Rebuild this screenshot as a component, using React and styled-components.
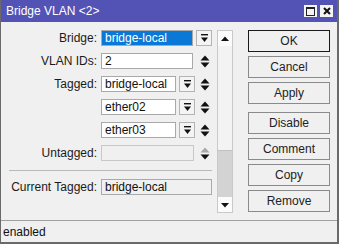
import React from "react";
import styled, { createGlobalStyle } from "styled-components";

// Bridge VLAN dialog (WinBox style)

const GlobalStyle = createGlobalStyle`
  html, body {
    margin: 0;
    padding: 0;
    background: #f0f0f0;
  }
  body {
    font-family: "Liberation Sans", Arial, sans-serif;
    font-size: 12px;
    color: #000;
  }
`;

const Window = styled.div`
  width: 339px;
  height: 244px;
  box-sizing: border-box;
  display: flex;
  flex-direction: column;
  background: #f0f0f0;
  border-left: 1px solid #6a6a6a;
  border-right: 2px solid #6a6a6a;
  border-bottom: 2px solid #6a6a6a;
  overflow: hidden;
`;

const TitleBar = styled.div`
  height: 22px;
  flex: none;
  display: flex;
  align-items: center;
  justify-content: space-between;
  background: #5353b6;
  color: #fff;
  padding: 0 4px 0 5px;
  font-size: 12px;
`;

const TitleButtons = styled.div`
  display: flex;
  gap: 3px;
`;

const TitleButton = styled.div`
  width: 13px;
  height: 12px;
  background: #f4f4f4;
  display: flex;
  align-items: center;
  justify-content: center;
`;

const Body = styled.div`
  flex: 1;
  display: flex;
  padding-top: 8px;
`;

const Form = styled.div`
  width: 211px;
  display: flex;
  flex-direction: column;
`;

const Row = styled.div`
  display: flex;
  align-items: center;
  height: 16px;
  margin-bottom: ${(p) => p.gap ?? 7}px;
`;

const Label = styled.div`
  width: 96px;
  margin-right: 4px;
  text-align: right;
  white-space: nowrap;
  color: #1a1a1a;
`;

const Field = styled.div`
  box-sizing: border-box;
  width: ${(p) => p.w}px;
  height: 16px;
  border: 1px solid ${(p) => (p.disabled ? "#c8c8c8" : "#a9a9a9")};
  background: ${(p) =>
    p.selected ? "#0a78d6" : p.readonly || p.disabled ? "#f0f0f0" : "#fff"};
  color: ${(p) => (p.selected ? "#fff" : "#111")};
  padding: 0 3px;
  line-height: 14px;
  white-space: nowrap;
  overflow: hidden;
`;

const DropButton = styled.div`
  box-sizing: border-box;
  width: 16px;
  height: 16px;
  margin-left: 3px;
  border: 1px solid #b4b4b4;
  background: #f4f4f4;
  display: flex;
  align-items: center;
  justify-content: center;
`;

const Spin = styled.div`
  width: 12px;
  height: 16px;
  margin-left: ${(p) => p.ml ?? 4}px;
  display: flex;
  align-items: center;
  justify-content: center;
`;

const Separator = styled.div`
  height: 1px;
  background: #b9b9b9;
  margin: 1px 0 8px 8px;
  width: 203px;
`;

const ScrollBar = styled.div`
  box-sizing: border-box;
  width: 16px;
  height: 183px;
  margin-left: 5px;
  border: 1px solid #c9c9c9;
  background: #f3f3f3;
  display: flex;
  flex-direction: column;
`;

const ScrollArrow = styled.div`
  height: 15px;
  background: #fbfbfb;
  display: flex;
  align-items: center;
  justify-content: center;
`;

const ScrollTrack = styled.div`
  flex: 1;
  display: flex;
  flex-direction: column;
  justify-content: flex-end;
`;

const ScrollThumb = styled.div`
  height: 46px;
  background: #d3d3d3;
  border-top: 1px solid #c0c0c0;
`;

const Buttons = styled.div`
  margin-left: 15px;
  display: flex;
  flex-direction: column;
  gap: 4px;
`;

const Button = styled.div`
  box-sizing: border-box;
  width: 82px;
  height: 22px;
  border: 1px solid ${(p) => (p.primary ? "#1a1a1a" : "#8a8a8a")};
  background: #f0f0f0;
  display: flex;
  align-items: center;
  justify-content: center;
  color: #222;
  font-size: 12px;
  margin-top: ${(p) => p.mt ?? 0}px;
`;

const StatusBar = styled.div`
  height: 21px;
  flex: none;
  border-top: 1px solid #a0a0a0;
  display: flex;
  align-items: center;
  padding-left: 2px;
  color: #111;
`;

const DropIcon = () => (
  <svg width="9" height="9" viewBox="0 0 9 9">
    <rect x="1" y="0" width="7" height="1.4" fill="#111" />
    <path d="M1 3.5 H8 L4.5 8 Z" fill="#111" />
  </svg>
);

const SpinIcon = ({ upColor = "#111", downColor = "#111" }) => (
  <svg width="10" height="13" viewBox="0 0 10 13">
    <path d="M0.5 5.5 L5 0.5 L9.5 5.5 Z" fill={upColor} />
    <path d="M0.5 7.5 L9.5 7.5 L5 12.5 Z" fill={downColor} />
  </svg>
);

const ArrowIcon = ({ down }) => (
  <svg width="8" height="6" viewBox="0 0 8 6">
    {down ? (
      <path d="M0 1 H8 L4 5.5 Z" fill="#111" />
    ) : (
      <path d="M0 5 H8 L4 0.5 Z" fill="#111" />
    )}
  </svg>
);

export default function App() {
  return (
    <>
      <GlobalStyle />
      <Window>
        <TitleBar>
          <span>Bridge VLAN &lt;2&gt;</span>
          <TitleButtons>
            <TitleButton>
              <svg width="9" height="9" viewBox="0 0 9 9">
                <rect x="0.5" y="0.5" width="8" height="8" fill="none" stroke="#222" />
                <rect x="0.5" y="0.5" width="8" height="1.5" fill="#222" />
              </svg>
            </TitleButton>
            <TitleButton>
              <svg width="8" height="8" viewBox="0 0 8 8">
                <path d="M1 1 L7 7 M7 1 L1 7" stroke="#111" strokeWidth="2" />
              </svg>
            </TitleButton>
          </TitleButtons>
        </TitleBar>
        <Body>
          <Form>
            <Row>
              <Label>Bridge:</Label>
              <Field w={92} selected>bridge-local</Field>
              <DropButton><DropIcon /></DropButton>
            </Row>
            <Row>
              <Label>VLAN IDs:</Label>
              <Field w={92}>2</Field>
              <Spin ml={6}><SpinIcon /></Spin>
            </Row>
            <Row>
              <Label>Tagged:</Label>
              <Field w={75}>bridge-local</Field>
              <DropButton><DropIcon /></DropButton>
              <Spin><SpinIcon /></Spin>
            </Row>
            <Row>
              <Label />
              <Field w={75}>ether02</Field>
              <DropButton><DropIcon /></DropButton>
              <Spin><SpinIcon /></Spin>
            </Row>
            <Row>
              <Label />
              <Field w={75}>ether03</Field>
              <DropButton><DropIcon /></DropButton>
              <Spin><SpinIcon /></Spin>
            </Row>
            <Row gap={8}>
              <Label>Untagged:</Label>
              <Field w={93} disabled />
              <Spin ml={5}><SpinIcon upColor="#a8a8a8" /></Spin>
            </Row>
            <Separator />
            <Row>
              <Label>Current Tagged:</Label>
              <Field w={111} readonly>bridge-local</Field>
            </Row>
          </Form>
          <ScrollBar>
            <ScrollArrow><ArrowIcon /></ScrollArrow>
            <ScrollTrack>
              <ScrollThumb />
            </ScrollTrack>
            <ScrollArrow><ArrowIcon down /></ScrollArrow>
          </ScrollBar>
          <Buttons>
            <Button primary>OK</Button>
            <Button>Cancel</Button>
            <Button>Apply</Button>
            <Button mt={4}>Disable</Button>
            <Button>Comment</Button>
            <Button>Copy</Button>
            <Button>Remove</Button>
          </Buttons>
        </Body>
        <StatusBar>enabled</StatusBar>
      </Window>
    </>
  );
}
